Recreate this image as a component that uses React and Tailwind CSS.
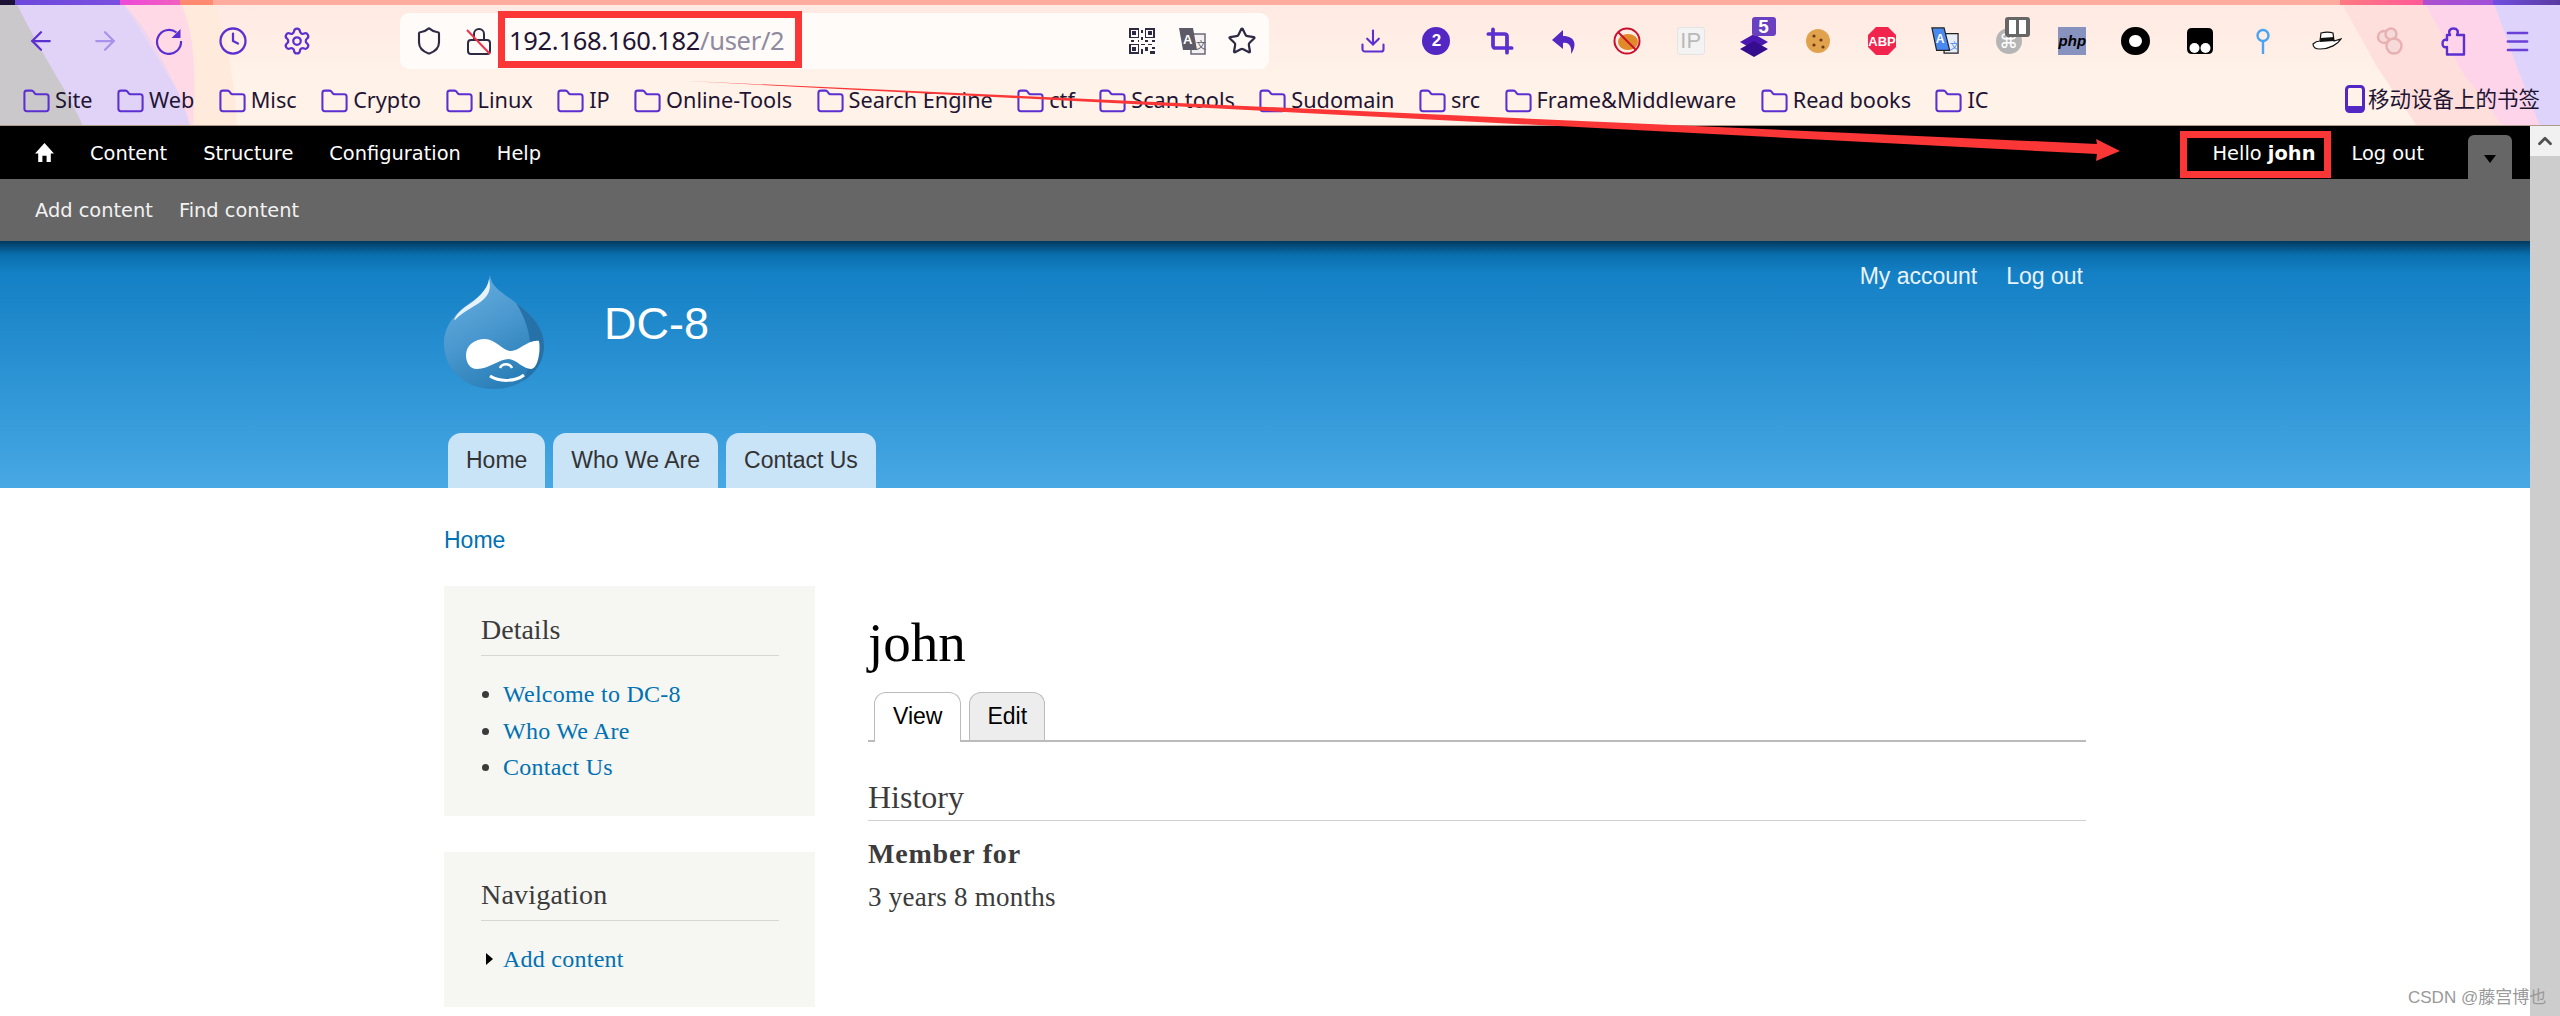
import React from "react";
import { ArrowLeft, ArrowRight, Clock, Settings, Shield, Star, Download, Crop, Folder, Menu, ChevronUp } from "lucide-react";

const bookmarks = [
  "Site",
  "Web",
  "Misc",
  "Crypto",
  "Linux",
  "IP",
  "Online-Tools",
  "Search Engine",
  "ctf",
  "Scan tools",
  "Sudomain",
  "src",
  "Frame&Middleware",
  "Read books",
  "IC",
];

const Slot = ({ children }) => (
  <div className="relative flex h-[64px] w-[63.6px] shrink-0 items-center justify-center">{children}</div>
);

const NavSlot = ({ children }) => (
  <div className="flex h-[64px] w-[64px] shrink-0 items-center justify-center">{children}</div>
);

const DrupalLogo = () => (
  <svg viewBox="13 12 100 114" className="h-[114px] w-[100px]">
    <defs>
      <linearGradient id="drop" x1="0" y1="0" x2="0.5" y2="1">
        <stop offset="0" stopColor="#6cb2e0" />
        <stop offset="0.55" stopColor="#4a98cf" />
        <stop offset="1" stopColor="#2b7fb8" />
      </linearGradient>
    </defs>
    <path d="M59 12C60 24 72 30 85 40C102 52 113 66 113 82C113 108 90 126 63 126C35 126 13 108 13 80C13 60 28 47 42 38C52 31 57 24 59 12Z" fill="url(#drop)" />
    <path d="M85 40C102 52 113 66 113 82C113 100 104 110 92 118C102 100 104 70 85 40Z" fill="#2672a8" />
    <path d="M58 16C57 27 45 37 34 44C26 50 22 57 24 57C32 48 46 43 53 36C59 30 60 24 58 16Z" fill="#ffffff" opacity="0.85" />
    <path d="M35 92C35 82 44 76 54 76C64 76 72 88 80 88C88 88 98 76 108 78C110 90 106 106 100 106C92 106 86 97 78 96C68 96 58 106 46 106C39 106 35 100 35 92Z" fill="#ffffff" />
    <path d="M69 105C71 100 79 100 81 105" fill="none" stroke="#ffffff" strokeWidth="2.5" />
    <path d="M59 113C68 119 84 119 93 112" fill="none" stroke="#ffffff" strokeWidth="3" />
  </svg>
);

const App = () => {
  return (
    <div className="relative flex h-[1016px] w-[2560px] flex-col overflow-hidden bg-white">
      {/* browser chrome */}
      <div className="relative h-[126px] shrink-0 overflow-hidden border-b border-b-[#b09a8c] bg-[linear-gradient(180deg,#ffe9e3_0%,#fff2e8_60%)] font-['Noto_Sans','Noto_Sans_CJK_SC',sans-serif] text-[#1f1533]">
        <svg viewBox="0 0 2560 126" className="absolute inset-0 h-[126px] w-[2560px]">
          <path d="M0 0H213C225 30 233 67 237 126H0Z" fill="#ffeadb" />
          <path d="M0 0H180C192 30 197 57 193 126H0Z" fill="#ffd9e6" />
          <path d="M0 0H120C135 20 157 57 177 90C183 102 187 114 190 126H0Z" fill="#e6d2f6" />
          <path d="M0 0H15C22 15 37 43 63 87C70 100 77 112 83 126H0Z" fill="#cbc8cc" />
          <path d="M120 0H15C22 15 37 43 63 87C70 100 77 112 83 126H190C187 114 183 102 177 90C170 75 150 30 120 0Z" fill="#dcd3fa" opacity="0.55" />
          <path d="M2340 0L2377 67L2417 126H2560V0Z" fill="#ffdfdc" />
          <path d="M2423 0L2463 73L2503 126H2560V0Z" fill="#fdd4ea" />
          <path d="M2493 0L2517 67L2540 126H2560V0Z" fill="#ddd3fb" />
        </svg>
        <div className="relative h-[5px] bg-[linear-gradient(90deg,#1b1236_0px,#1b1236_15px,#6c47dc_15px,#7a4fe0_120px,#ee48d8_120px,#f060c0_180px,#ff8a70_180px,#ff8a70_213px,#ffab9e_213px,#ffab9e_2340px,#ff7a80_2340px,#ff5a98_2423px,#ac4fd0_2423px,#a050d8_2493px,#7050e0_2493px,#5a3aa0_2560px)]" />

        {/* toolbar */}
        <div className="relative flex h-[72px] items-center pl-[9px]">
          <NavSlot><ArrowLeft size={30} strokeWidth={1.8} className="text-[#5b2fd0]" /></NavSlot>
          <NavSlot><ArrowRight size={30} strokeWidth={1.8} className="text-[#a892ec]" /></NavSlot>
          <NavSlot>
            <svg viewBox="0 0 28 28" className="h-[28px] w-[28px]" fill="none">
              <path d="M21.5 5.5A12 12 0 1 0 26 14" stroke="#5b2fd0" strokeWidth="2.2" />
              <path d="M25.5 2V11H16.5Z" fill="#5b2fd0" />
            </svg>
          </NavSlot>
          <NavSlot><Clock size={30} strokeWidth={1.8} className="text-[#5b2fd0]" /></NavSlot>
          <NavSlot><Settings size={30} strokeWidth={1.8} className="text-[#5b2fd0]" /></NavSlot>

          <div className="ml-[71px] flex h-[56px] w-[869px] shrink-0 items-center rounded-[9px] bg-[#fffbf8]">
            <div className="flex w-[54px] justify-center pl-[4px]"><Shield size={30} strokeWidth={1.7} className="text-[#2f2a44]" /></div>
            <div className="relative flex w-[50px] justify-center">
              <svg viewBox="0 0 26 28" className="h-[28px] w-[26px]" fill="none">
                <rect x="2" y="13" width="22" height="14" rx="3" stroke="#2f2a44" strokeWidth="2" />
                <path d="M8 13V7a5 5 0 0 1 10 0v6" stroke="#2f2a44" strokeWidth="2" />
                <path d="M1 3L24 27" stroke="#f0324a" strokeWidth="2" />
              </svg>
            </div>
            <span className="ml-[5px] text-[25.5px] leading-none tracking-[-0.3px]">192.168.160.182<span className="text-[#8f8aa0]">/user/2</span></span>
            <div className="ml-auto flex items-center pr-[2px]">
              <div className="flex w-[50px] justify-center">
                <svg viewBox="0 0 15 15" className="h-[26px] w-[26px]" shapeRendering="crispEdges">
                  <g fill="none" stroke="#2f2a44">
                    <rect x="0.5" y="0.5" width="5" height="5" />
                    <rect x="9.5" y="0.5" width="5" height="5" />
                    <rect x="0.5" y="9.5" width="5" height="5" />
                  </g>
                  <path d="M2 2h2v2H2zM11 2h2v2h-2zM2 11h2v2H2zM7 1h1v2H7zM7 5h1v2H7zM1 7h2v1H1zM5 7h1v1H5zM9 7h2v1H9zM13 7h2v1h-2zM7 9h2v1H7zM11 9h2v1h-2zM7 12h1v3H7zM9 11h2v2H9zM13 11h2v1h-2zM12 13h3v2h-3z" fill="#2f2a44" />
                </svg>
              </div>
              <div className="flex w-[50px] justify-center">
                <svg viewBox="0 0 30 30" className="h-[30px] w-[30px]">
                  <path d="M14 8h14v20H14z" fill="#f2f0f2" stroke="#6e6a78" strokeWidth="1.5" />
                  <path d="M2 2h14l4 22H6z" fill="#5d5a68" />
                  <text x="6" y="18" fontSize="13" fontWeight="700" fill="#fff" fontFamily="Liberation Sans">A</text>
                  <text x="19" y="23" fontSize="10" fill="#5d5a68" fontFamily="Noto Sans CJK SC">文</text>
                </svg>
              </div>
              <div className="flex w-[50px] justify-center"><Star size={30} strokeWidth={1.8} className="text-[#2f2a44]" /></div>
            </div>
          </div>

          <div className="ml-[72px] flex items-center">
            <Slot><Download size={28} strokeWidth={1.8} className="text-[#5b2fd0]" /></Slot>
            <Slot>
              <div className="flex h-[28px] w-[28px] items-center justify-center rounded-full bg-[#5327c4] font-['Liberation_Sans',sans-serif] text-[17px] font-bold text-white">2</div>
            </Slot>
            <Slot><Crop size={28} strokeWidth={3.2} className="text-[#5b2fd0]" /></Slot>
            <Slot>
              <svg viewBox="0 0 26 28" className="h-[28px] w-[26px]" fill="#5327c4">
                <path d="M12 3L1 13L12 22V16C18 15 21 19 20 27C26 19 25 9 12 9Z" />
              </svg>
            </Slot>
            <Slot>
              <svg viewBox="0 0 28 28" className="h-[28px] w-[28px]">
                <ellipse cx="15" cy="15" rx="10" ry="8" fill="#e08a2a" />
                <circle cx="14" cy="14" r="12.5" fill="none" stroke="#c8102e" strokeWidth="2" />
                <path d="M5 5L23 23" stroke="#c8102e" strokeWidth="2" />
              </svg>
            </Slot>
            <Slot>
              <div className="flex h-[28px] w-[28px] items-center justify-center rounded-[3px] border border-[#e4e4e4] bg-[#f3f3f3] font-['Liberation_Sans',sans-serif] text-[22px] leading-none text-[#b9b9b9]">IP</div>
            </Slot>
            <Slot>
              <svg viewBox="0 0 28 26" className="mt-[8px] h-[26px] w-[28px]">
                <path d="M14 2L28 10L14 18L0 10Z" fill="#4a18b0" />
                <path d="M14 9L28 17L14 25L0 17Z" fill="#360c8e" />
              </svg>
              <div className="absolute left-[29px] top-[8px] flex h-[19px] w-[24px] items-center justify-center rounded-[3px] bg-[#6a3fc0] font-['Liberation_Sans',sans-serif] text-[19px] font-bold leading-none text-white">5</div>
            </Slot>
            <Slot>
              <svg viewBox="0 0 26 26" className="h-[26px] w-[26px]">
                <circle cx="13" cy="13" r="12" fill="#e0a24c" />
                <circle cx="9" cy="8" r="1.6" fill="#6b3a14" />
                <circle cx="16" cy="12" r="1.6" fill="#6b3a14" />
                <circle cx="9" cy="17" r="1.6" fill="#6b3a14" />
                <circle cx="18" cy="19" r="1.6" fill="#6b3a14" />
              </svg>
            </Slot>
            <Slot>
              <svg viewBox="0 0 28 28" className="h-[28px] w-[28px]">
                <path d="M8 0H20L28 8V20L20 28H8L0 20V8Z" fill="#f0244c" />
                <text x="14" y="19" textAnchor="middle" fontSize="13" fontWeight="700" fill="#fff" fontFamily="Liberation Sans">ABP</text>
              </svg>
            </Slot>
            <Slot>
              <svg viewBox="0 0 30 30" className="h-[28px] w-[28px]">
                <path d="M14 7h15v21H14z" fill="#e8eef8" stroke="#222" strokeWidth="1.3" />
                <path d="M1 1h13l6 24H6z" fill="#4a8af0" stroke="#222" strokeWidth="1.3" />
                <text x="5" y="17" fontSize="13" fontWeight="700" fill="#fff" fontFamily="Liberation Sans">A</text>
                <text x="20" y="24" fontSize="10" fill="#4a8af0" fontFamily="Noto Sans CJK SC">文</text>
              </svg>
            </Slot>
            <Slot>
              <div className="flex h-[26px] w-[26px] items-center justify-center rounded-full bg-[#b5b5b5] font-['DejaVu_Sans',sans-serif] text-[19px] leading-none text-white">⌘</div>
              <div className="absolute left-[28px] top-[8px] flex h-[20px] w-[25px] items-center justify-center gap-[3px] rounded-[3px] bg-[#666]">
                <div className="h-[14px] w-[7px] bg-white" />
                <div className="h-[14px] w-[7px] bg-white" />
              </div>
            </Slot>
            <Slot>
              <div className="flex h-[28px] w-[28px] items-center justify-center bg-[#8892bf] font-['Liberation_Sans',sans-serif] text-[15px] font-bold italic text-black">php</div>
            </Slot>
            <Slot>
              <div className="h-[28px] w-[29px] rounded-full border-[8px] border-black bg-white" />
            </Slot>
            <Slot>
              <svg viewBox="0 0 26 26" className="h-[26px] w-[26px]">
                <path d="M5 0H21Q26 0 26 5V21Q26 26 21 26H5Q0 26 0 21V5Q0 0 5 0Z" fill="#000" />
                <circle cx="7.5" cy="20" r="5" fill="#fff" />
                <circle cx="18.5" cy="20" r="5" fill="#fff" />
              </svg>
            </Slot>
            <Slot>
              <svg viewBox="0 0 16 26" className="h-[26px] w-[16px]" fill="none" stroke="#4ba3f5" strokeWidth="2.4">
                <circle cx="8" cy="7.5" r="5.5" />
                <path d="M8 13V26" />
              </svg>
            </Slot>
            <Slot>
              <svg viewBox="0 0 30 20" className="h-[20px] w-[30px]">
                <path d="M9 2C13 1 18 1 21 2L22 10L29 8C26 13 18 18 8 18C3 18 1 16 1 13C3 11 6 10 8 10Z" fill="#fff" stroke="#111" strokeWidth="1.2" />
                <path d="M8.5 7L22 6L22 10L8 11Z" fill="#111" />
              </svg>
            </Slot>
            <Slot>
              <svg viewBox="0 0 28 28" className="h-[28px] w-[28px]" fill="#f6dada" stroke="#e8b0b0" strokeWidth="2.4">
                <circle cx="8" cy="10" r="6" />
                <circle cx="15" cy="7" r="5.5" />
                <circle cx="18" cy="19" r="7.5" />
              </svg>
            </Slot>
            <Slot>
              <svg viewBox="0 0 25 29" className="h-[29px] w-[25px]" fill="none" stroke="#5b2fd0" strokeWidth="2.4" strokeLinejoin="round">
                <path d="M9 8C7 4 9 1.5 12.5 1.5C16 1.5 18 4 16 8H23V27.5H6V20C3 21 1.5 19 1.5 16.5C1.5 14 3 12 6 13V8Z" />
              </svg>
            </Slot>
            <Slot><Menu size={29} strokeWidth={2} className="text-[#6a40d8]" /></Slot>
          </div>
        </div>

        {/* bookmarks bar */}
        <div className="relative flex h-[48px] items-center pl-[22px] text-[21.7px]">
          <div className="flex items-center gap-[23.4px]">
            {bookmarks.map((name) => (
              <div key={name} className="flex items-center gap-[4px]">
                <Folder size={29} strokeWidth={1.7} className="text-[#5b2fd0]" />
                <span className="-mt-[2px] leading-none">{name}</span>
              </div>
            ))}
          </div>
          <div className="absolute left-[2345px] top-[8px] flex items-center gap-[3px]">
            <svg viewBox="0 0 20 28" className="h-[28px] w-[20px]">
              <rect x="1.5" y="1.5" width="17" height="25" rx="3" fill="none" stroke="#5327c4" strokeWidth="3" />
              <rect x="1.5" y="21" width="17" height="6" rx="2" fill="#5327c4" />
            </svg>
            <span className="text-[21.5px] leading-none">移动设备上的书签</span>
          </div>
        </div>
      </div>

      <div className="flex min-h-0 flex-1">
        <div className="flex min-w-0 flex-1 flex-col">
          {/* admin toolbar */}
          <div className="flex h-[53px] shrink-0 items-center bg-black pl-[34px] pr-[18px] font-['DejaVu_Sans',sans-serif] text-[19.4px] text-white">
            <svg viewBox="0 0 20 20" className="h-[21px] w-[21px]" fill="#fff">
              <path d="M10 1L19 11H16V19H12V13H8V19H4V11H1Z" />
            </svg>
            <div className="ml-[35px] flex gap-[36px] pt-[2px]">
              <span>Content</span>
              <span>Structure</span>
              <span>Configuration</span>
              <span>Help</span>
            </div>
            <div className="ml-auto flex h-full items-center">
              <span className="pt-[2px]">Hello <b>john</b></span>
              <span className="ml-[36px] pt-[2px]">Log out</span>
              <div className="ml-[44px] mt-auto flex h-[44px] w-[44px] items-center justify-center rounded-t-[6px] bg-[#666]">
                <div className="mt-[4px] h-0 w-0 border-x-[6px] border-t-[8px] border-x-transparent border-t-black" />
              </div>
            </div>
          </div>
          <div className="flex h-[62px] shrink-0 items-center gap-[26px] bg-[#666] pl-[35px] pt-[2px] font-['DejaVu_Sans',sans-serif] text-[19.4px] text-[#f2f2f2]">
            <span>Add content</span>
            <span>Find content</span>
          </div>

          {/* site header */}
          <div className="flex h-[247px] shrink-0 flex-col justify-between bg-[linear-gradient(180deg,#023a60_0px,#0a6fae_14px,#1480c5_32px,#47a8e4_100%)] pl-[444px] font-['Liberation_Sans',sans-serif]">
            <div className="flex w-[1642px] items-start justify-between">
              <div className="flex items-start pt-[34px]">
                <DrupalLogo />
                <div className="ml-[60px] mt-[24px] text-[45px] leading-[50px] text-white">DC-8</div>
              </div>
              <div className="flex gap-[29px] pr-[3px] pt-[20px] text-[23px] leading-[30px] text-[#e8f3fb]">
                <span>My account</span>
                <span>Log out</span>
              </div>
            </div>
            <div className="flex gap-[8px] pl-[4px] text-[23px] text-[#333]">
              <div className="flex h-[55px] items-center rounded-t-[13px] bg-[#c9e3f7] px-[18px]">Home</div>
              <div className="flex h-[55px] items-center rounded-t-[13px] bg-[#c9e3f7] px-[18px]">Who We Are</div>
              <div className="flex h-[55px] items-center rounded-t-[13px] bg-[#c9e3f7] px-[18px]">Contact Us</div>
            </div>
          </div>

          {/* page */}
          <div className="pl-[444px] font-['Liberation_Serif',serif] text-[#3b3b3b]">
            <div className="pt-[34px] font-['Liberation_Sans',sans-serif] text-[23px] leading-[36px] text-[#0071b3]">Home</div>
            <div className="mt-[28px] flex items-start">
              <div className="flex w-[371px] shrink-0 flex-col gap-[36px]">
                <div className="h-[230px] bg-[#f6f6f2] pl-[37px] pr-[36px] pt-[26px]">
                  <div className="border-b border-b-[#d6d6d6] pb-[7px] text-[28px] leading-[36px]">Details</div>
                  <ul className="mt-[20px] list-disc pl-[22px] text-[24px] leading-[36.5px] tracking-[0.25px] text-[#0071b3] marker:text-[#3b3b3b]">
                    <li>Welcome to DC-8</li>
                    <li>Who We Are</li>
                    <li>Contact Us</li>
                  </ul>
                </div>
                <div className="h-[155px] bg-[#f6f6f2] pl-[37px] pr-[36px] pt-[25px]">
                  <div className="border-b border-b-[#d6d6d6] pb-[7px] text-[28px] leading-[36px] tracking-[0.2px]">Navigation</div>
                  <div className="mt-[20px] flex items-center text-[24px] leading-[36px] tracking-[0.25px] text-[#0071b3]">
                    <div className="ml-[5px] h-0 w-0 border-y-[6px] border-l-[7px] border-y-transparent border-l-black" />
                    <span className="ml-[10px]">Add content</span>
                  </div>
                </div>
              </div>

              <div className="ml-[53px] w-[1218px] shrink-0">
                <h1 className="mt-[25px] text-[55px] leading-[64px] text-black">john</h1>
                <div className="mt-[17px] flex items-end gap-[8px] border-b-2 border-b-[#bbb] pl-[6px] font-['Liberation_Sans',sans-serif] text-[23px] text-black">
                  <div className="-mb-[2px] flex h-[50px] items-center rounded-t-[12px] border border-b-0 border-[#bbb] bg-white px-[18px] pb-[3px]">View</div>
                  <div className="flex h-[48px] items-center rounded-t-[12px] border border-b-0 border-[#bbb] bg-[#ededed] px-[17px] pb-[1px]">Edit</div>
                </div>
                <div className="mt-[35px] border-b border-b-[#d0d0d0] pb-[3px] text-[32px] leading-[40px]">History</div>
                <div className="mt-[15px] text-[28px] font-bold leading-[36px] tracking-[0.8px]">Member for</div>
                <div className="mt-[7px] text-[27px] leading-[36px] tracking-[0.25px]">3 years 8 months</div>
              </div>
            </div>
          </div>
        </div>

        {/* scrollbar */}
        <div className="w-[30px] shrink-0 bg-[#cdcdcd]">
          <div className="flex h-[30px] items-center justify-center bg-[#f1f1f1]">
            <ChevronUp size={22} strokeWidth={3} className="text-[#505050]" />
          </div>
        </div>
      </div>

      {/* screenshot annotations */}
      <div className="absolute left-[498px] top-[11px] h-[57px] w-[304px] border-[7px] border-[#fb3636]" />
      <div className="absolute left-[2180px] top-[131px] h-[47px] w-[151px] border-[7px] border-[#fb3636]" />
      <svg viewBox="0 0 2560 1016" className="pointer-events-none absolute inset-0 h-[1016px] w-[2560px]">
        <polygon points="687,81 2097,144 2096,139 2120,151 2096,161 2097,154" fill="#fb3636" />
      </svg>
      <div className="absolute left-[2408px] top-[988px] font-['Liberation_Sans','Noto_Sans_CJK_SC',sans-serif] text-[17px] leading-[20px] text-[#999]">CSDN @藤宫博也</div>
    </div>
  );
};

export default App;
